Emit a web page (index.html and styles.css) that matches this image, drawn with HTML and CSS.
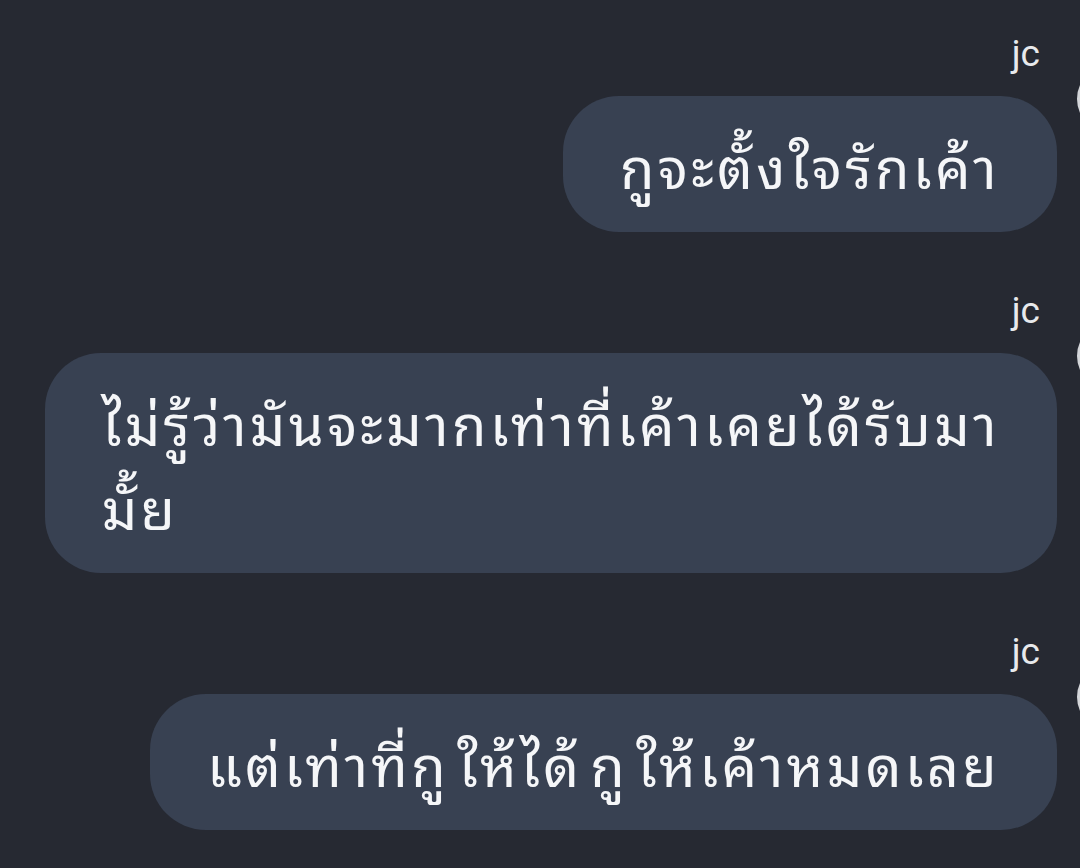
FILE: index.html
```html
<!DOCTYPE html>
<html lang="th">

<head>
    <meta charset="UTF-8">
    <meta name="viewport" content="width=device-width, initial-scale=1.0">
    <title>jc</title>
    <link rel="stylesheet" href="styles.css">
</head>

<body>
    <div class="chat">
        <div class="message">
            <div class="sender">jc</div>
            <div class="row">
                <div class="bubble">กูจะตั้งใจรักเค้า</div>
                <div class="avatar"></div>
            </div>
        </div>

        <div class="message">
            <div class="sender">jc</div>
            <div class="row">
                <div class="bubble">ไม่รู้ว่ามันจะมากเท่าที่เค้าเคยได้รับมา<br>มั้ย</div>
                <div class="avatar"></div>
            </div>
        </div>

        <div class="message">
            <div class="sender">jc</div>
            <div class="row">
                <div class="bubble">แต่เท่าที่กู ให้ได้ กู ให้เค้าหมดเลย</div>
                <div class="avatar"></div>
            </div>
        </div>
    </div>
</body>

</html>
```

FILE: styles.css
```css
body {
    margin: 0;
    background-color: #262932;
    color: #f3f4f6;
    font-family: Roboto, 'Noto Sans', sans-serif;
    overflow: hidden;
}

.chat {
    display: flex;
    flex-direction: column;
    gap: 57px;
    padding: 32px 0 0 0;
}

.message {
    display: flex;
    flex-direction: column;
    align-items: flex-end;
    gap: 20px;
}

.sender {
    font-size: 37px;
    line-height: 44px;
    color: #e8e9ec;
    margin-right: 40px;
}

.row {
    display: flex;
    align-items: flex-start;
    gap: 20px;
    margin-right: -63px;
}

.bubble {
    background-color: #384152;
    border-radius: 56px;
    padding: 26px 57px;
    font-family: 'Noto Sans Thai Looped', 'Noto Sans Thai', Loma, Garuda, 'Noto Sans', sans-serif;
    font-size: 56px;
    letter-spacing: 3.3px;
    word-spacing: -10px;
    line-height: 84px;
    color: #f5f6f8;
}

.avatar {
    flex: none;
    width: 60px;
    height: 60px;
    margin-top: -30px;
    border: 3px solid #d4d6da;
    border-radius: 50%;
}
```
